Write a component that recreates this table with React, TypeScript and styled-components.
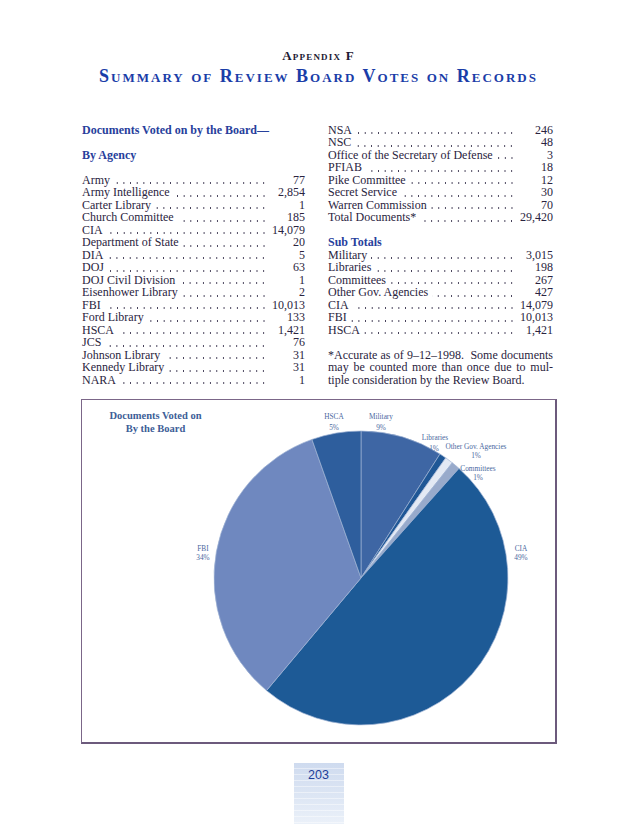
import React from "react";
import styled, { createGlobalStyle } from "styled-components";

const GlobalStyle = createGlobalStyle`
  html, body { margin: 0; padding: 0; background: #ffffff; }
  body {
    font-family: "Liberation Serif", "Times New Roman", serif;
    color: #2a2440;
  }
`;

const Page = styled.div`
  width: 637px;
  height: 824px;
  box-sizing: border-box;
  padding-top: 48px;
  display: flex;
  flex-direction: column;
  align-items: center;
  overflow: hidden;
`;

const Kicker = styled.div`
  font-weight: bold;
  font-size: 13px;
  line-height: 16px;
  font-variant: small-caps;
  letter-spacing: 1.2px;
  color: #1d1a33;
`;

const Title = styled.h1`
  margin: 1px 0 0;
  font-weight: bold;
  font-size: 18px;
  line-height: 22px;
  font-variant: small-caps;
  letter-spacing: 2px;
  color: #1a3da8;
`;

const Columns = styled.div`
  align-self: flex-start;
  margin: 36.75px 0 0 82px;
  width: 471px;
  display: grid;
  grid-template-columns: 223px 225px;
  column-gap: 23px;
  font-size: 12px;
`;

const Column = styled.div`
  display: flex;
  flex-direction: column;
`;

const Line = styled.div`
  height: 12.5px;
  line-height: 12.5px;
  white-space: nowrap;
`;

const Heading = styled(Line)`
  font-weight: bold;
  color: #27409c;
`;

const Row = styled.div`
  display: flex;
  height: 12.5px;
  line-height: 12.5px;
  white-space: nowrap;
`;

const Label = styled.span`
  flex: none;
`;

const Leader = styled.span`
  flex: 1;
  min-width: 0;
  margin: 0 4px 0 4px;
  background-image: radial-gradient(circle at center, #2a2440 0.55px, rgba(42, 36, 64, 0.35) 0.8px, transparent 1.05px);
  background-size: 6.67px 2.4px;
  background-repeat: repeat-x;
  background-position: right 0 top 8.4px;
`;

const Num = styled.span`
  flex: none;
  width: 34px;
  text-align: right;
`;

const Note = styled.div<{ $last?: boolean }>`
  height: 12.5px;
  line-height: 12.5px;
  white-space: nowrap;
  text-align: justify;
  text-align-last: ${(p) => (p.$last ? "left" : "justify")};
`;

const ChartBox = styled.div`
  margin-top: 12.75px;
  width: 476px;
  height: 345px;
  box-sizing: border-box;
  border: 1px solid #7b6688;
  border-right: 2px solid #6c5a7c;
  border-bottom: 2px solid #6c5a7c;
  display: grid;
  grid-template: 1fr / 1fr;
`;

const ChartTitle = styled.div`
  grid-area: 1 / 1;
  justify-self: start;
  align-self: start;
  margin: 8.5px 0 0 26px;
  width: 96px;
  text-align: center;
  font-weight: bold;
  font-size: 10.5px;
  line-height: 13px;
  color: #3d5e97;
`;

const ChartSvg = styled.svg`
  grid-area: 1 / 1;
  display: block;
`;

const PageNum = styled.div`
  margin-top: 19px;
  width: 50px;
  flex: 1;
  box-sizing: border-box;
  padding-top: 5px;
  text-align: center;
  font-family: "Liberation Sans", Arial, sans-serif;
  font-size: 12.5px;
  line-height: 14px;
  color: #1e3f99;
  background:
    repeating-linear-gradient(
      180deg,
      rgba(255, 255, 255, 0) 0px,
      rgba(255, 255, 255, 0) 5px,
      rgba(255, 255, 255, 0.45) 5px,
      rgba(255, 255, 255, 0.45) 6px
    ),
    linear-gradient(180deg, #cfdbef 0%, #dde6f4 55%, #ebf1f9 100%);
`;

type Entry = [string, string];

const agencies: Entry[] = [
  ["Army", "77"],
  ["Army Intelligence", "2,854"],
  ["Carter Library", "1"],
  ["Church Committee", "185"],
  ["CIA", "14,079"],
  ["Department of State", "20"],
  ["DIA", "5"],
  ["DOJ", "63"],
  ["DOJ Civil Division", "1"],
  ["Eisenhower Library", "2"],
  ["FBI", "10,013"],
  ["Ford Library", "133"],
  ["HSCA", "1,421"],
  ["JCS", "76"],
  ["Johnson Library", "31"],
  ["Kennedy Library", "31"],
  ["NARA", "1"],
];

const agencies2: Entry[] = [
  ["NSA", "246"],
  ["NSC", "48"],
  ["Office of the Secretary of Defense", "3"],
  ["PFIAB", "18"],
  ["Pike Committee", "12"],
  ["Secret Service", "30"],
  ["Warren Commission", "70"],
  ["Total Documents*", "29,420"],
];

const subTotals: Entry[] = [
  ["Military", "3,015"],
  ["Libraries", "198"],
  ["Committees", "267"],
  ["Other Gov. Agencies", "427"],
  ["CIA", "14,079"],
  ["FBI", "10,013"],
  ["HSCA", "1,421"],
];

const LeaderRow = ({ label, value }: { label: string; value: string }) => (
  <Row>
    <Label>{label}</Label>
    <Leader />
    <Num>{value}</Num>
  </Row>
);

const CX = 279;
const CY = 178;
const R = 147;

const pt = (a: number) => {
  const rad = (a * Math.PI) / 180;
  return [CX + R * Math.sin(rad), CY - R * Math.cos(rad)];
};

const slicePath = (a1: number, a2: number) => {
  const [x1, y1] = pt(a1);
  const [x2, y2] = pt(a2);
  const large = a2 - a1 > 180 ? 1 : 0;
  return `M${CX},${CY} L${x1.toFixed(2)},${y1.toFixed(2)} A${R},${R} 0 ${large} 1 ${x2.toFixed(2)},${y2.toFixed(2)} Z`;
};

const slices = [
  { a1: 0, a2: 32.5, fill: "#3e66a4" },
  { a1: 32.5, a2: 35.2, fill: "#1f5796" },
  { a1: 35.2, a2: 38.4, fill: "#e3e9f4" },
  { a1: 38.4, a2: 41.8, fill: "#98aacb" },
  { a1: 41.8, a2: 220, fill: "#1d5a96" },
  { a1: 220, a2: 340.5, fill: "#6f88bf" },
  { a1: 340.5, a2: 360, fill: "#2e5e9d" },
];

const labels: { x: number; y: number; t: string }[] = [
  { x: 252, y: 18.5, t: "HSCA" },
  { x: 252, y: 29.5, t: "5%" },
  { x: 299, y: 18.5, t: "Military" },
  { x: 299, y: 29.5, t: "9%" },
  { x: 353, y: 39.5, t: "Libraries" },
  { x: 352, y: 50.5, t: "1%" },
  { x: 394, y: 48.5, t: "Other Gov. Agencies" },
  { x: 394, y: 57.5, t: "1%" },
  { x: 396, y: 70.5, t: "Committees" },
  { x: 396, y: 79.5, t: "1%" },
  { x: 121, y: 150.5, t: "FBI" },
  { x: 121, y: 159.5, t: "34%" },
  { x: 439, y: 150.5, t: "CIA" },
  { x: 439, y: 159.5, t: "49%" },
];

export default function App() {
  return (
    <>
      <GlobalStyle />
      <Page>
        <Kicker>Appendix F</Kicker>
        <Title>Summary of Review Board Votes on Records</Title>

        <Columns>
          <Column>
            <Heading>Documents Voted on by the Board—</Heading>
            <Line />
            <Heading>By Agency</Heading>
            <Line />
            {agencies.map(([l, v]) => (
              <LeaderRow key={l} label={l} value={v} />
            ))}
          </Column>
          <Column>
            {agencies2.map(([l, v]) => (
              <LeaderRow key={l} label={l} value={v} />
            ))}
            <Line />
            <Heading>Sub Totals</Heading>
            {subTotals.map(([l, v]) => (
              <LeaderRow key={l} label={l} value={v} />
            ))}
            <Line />
            <Note>*Accurate as of 9–12–1998.&nbsp; Some documents</Note>
            <Note>may be counted more than once due to mul-</Note>
            <Note $last>tiple consideration by the Review Board.</Note>
          </Column>
        </Columns>

        <ChartBox>
          <ChartTitle>
            Documents Voted on
            <br />
            By the Board
          </ChartTitle>
          <ChartSvg width="473" height="342" viewBox="0 0 473 342">
            {slices.map((s, i) => (
              <path
                key={i}
                d={slicePath(s.a1, s.a2)}
                fill={s.fill}
                stroke="#9fb3d4"
                strokeWidth="0.7"
                strokeLinejoin="round"
              />
            ))}
            {labels.map((l, i) => (
              <text
                key={i}
                x={l.x}
                y={l.y}
                textAnchor="middle"
                fontFamily="'Liberation Serif', serif"
                fontSize="7.3"
                fill="#4a68a0"
              >
                {l.t}
              </text>
            ))}
          </ChartSvg>
        </ChartBox>

        <PageNum>203</PageNum>
      </Page>
    </>
  );
}
